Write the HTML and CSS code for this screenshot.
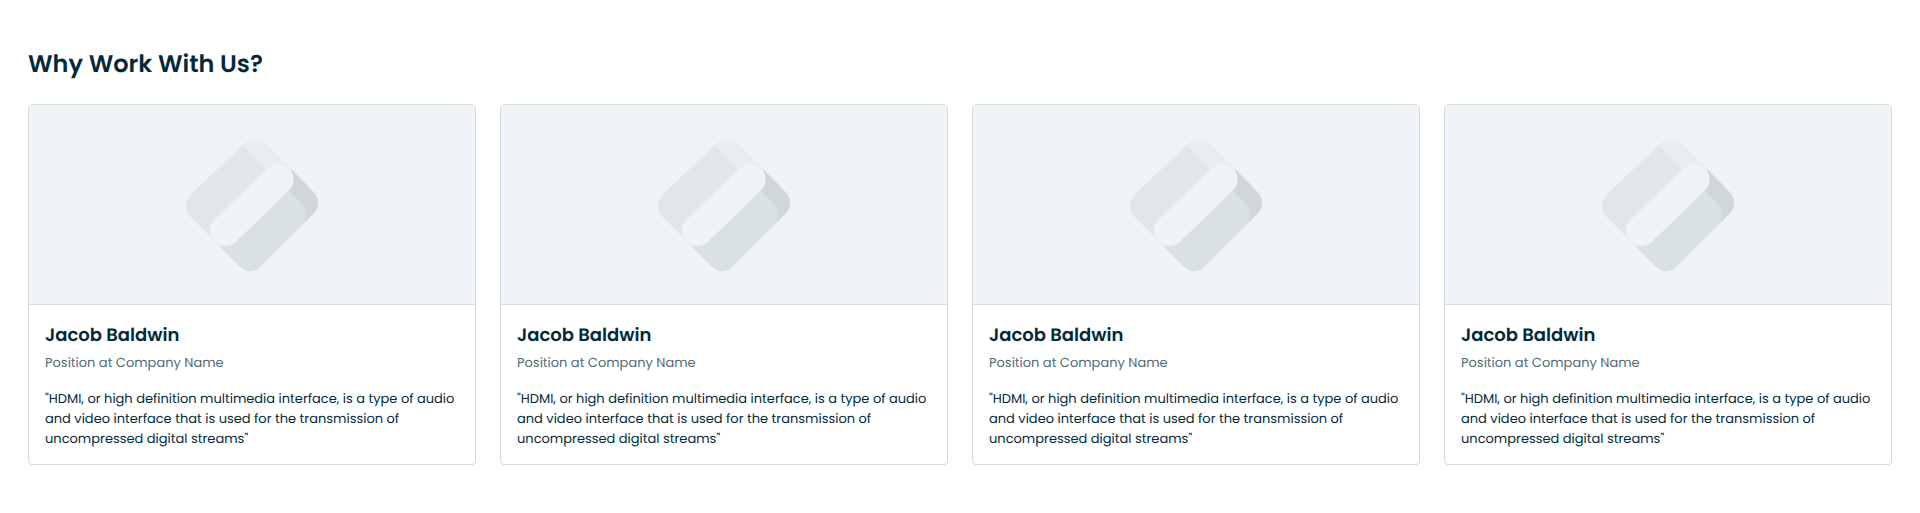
FILE: index.html
```html
<!DOCTYPE html>
<html lang="en">
<head>
<meta charset="utf-8">
<title>Why Work With Us?</title>
<link rel="stylesheet" href="styles.css">
</head>
<body>
<svg class="defs" aria-hidden="true">
  <symbol id="mark" viewBox="48 57 396 396">
    <path fill="#e1e7ea" d="M219 75L64 222C43 242 43 271 61 290L138 367L292 152Z"/>
    <path fill="#e8edf0" d="M219 75L226 68C243 53 268 53 286 69L367 150L330 190Z"/>
    <path fill="#cfd7da" d="M364 148L433 218C448 233 448 263 433 279L390 321L340 200Z"/>
    <path fill="#d9e1e3" d="M140 370L207 438C225 458 253 458 272 440L404 308C412 287 408 264 393 250L355 213L300 200Z"/>
    <path fill="none" stroke="#eff3f6" stroke-width="92" stroke-linecap="round" d="M325 178L166 332"/>
  </symbol>
</svg>
<main class="section">
  <h2 class="title">Why Work With Us?</h2>
  <div class="cards">
    <article class="card">
      <div class="media"><svg class="logo"><use href="#mark"/></svg></div>
      <div class="body">
        <h3 class="name">Jacob Baldwin</h3>
        <p class="position">Position at Company Name</p>
        <p class="quote">"HDMI, or high definition multimedia interface, is a type of audio and video interface that is used for the transmission of uncompressed digital streams"</p>
      </div>
    </article>
    <article class="card">
      <div class="media"><svg class="logo"><use href="#mark"/></svg></div>
      <div class="body">
        <h3 class="name">Jacob Baldwin</h3>
        <p class="position">Position at Company Name</p>
        <p class="quote">"HDMI, or high definition multimedia interface, is a type of audio and video interface that is used for the transmission of uncompressed digital streams"</p>
      </div>
    </article>
    <article class="card">
      <div class="media"><svg class="logo"><use href="#mark"/></svg></div>
      <div class="body">
        <h3 class="name">Jacob Baldwin</h3>
        <p class="position">Position at Company Name</p>
        <p class="quote">"HDMI, or high definition multimedia interface, is a type of audio and video interface that is used for the transmission of uncompressed digital streams"</p>
      </div>
    </article>
    <article class="card">
      <div class="media"><svg class="logo"><use href="#mark"/></svg></div>
      <div class="body">
        <h3 class="name">Jacob Baldwin</h3>
        <p class="position">Position at Company Name</p>
        <p class="quote">"HDMI, or high definition multimedia interface, is a type of audio and video interface that is used for the transmission of uncompressed digital streams"</p>
      </div>
    </article>
  </div>
</main>
</body>
</html>
```

FILE: styles.css
```css
* {
  box-sizing: border-box;
  margin: 0;
}

body {
  background: #fff;
  color: #042a3a;
  font-family: Poppins, Inter, "Open Sans", sans-serif;
  text-rendering: geometricPrecision;
}

.defs {
  display: none;
}

.section {
  padding: 49px 28px 48px;
}

.title {
  height: 32px;
  margin-bottom: 23px;
  font-size: 24px;
  font-weight: 600;
  line-height: 32px;
}

.cards {
  display: grid;
  grid-template-columns: repeat(4, 1fr);
  gap: 24px;
}

.card {
  height: 361px;
  overflow: hidden;
  border: 1px solid #d3dcde;
  border-radius: 4px;
}

.media {
  display: flex;
  align-items: center;
  justify-content: center;
  height: 200px;
  border-bottom: 1px solid #d3dcde;
  background: #eff3f6;
}

.logo {
  width: 132px;
  height: 132px;
}

.body {
  padding: 17px 16px 15px;
}

.name {
  margin-bottom: 3px;
  font-size: 18px;
  font-weight: 600;
  line-height: 28px;
}

.position {
  margin-bottom: 16px;
  color: #526b78;
  font-size: 13px;
  line-height: 20px;
}

.quote {
  font-size: 13px;
  line-height: 20px;
}
```
